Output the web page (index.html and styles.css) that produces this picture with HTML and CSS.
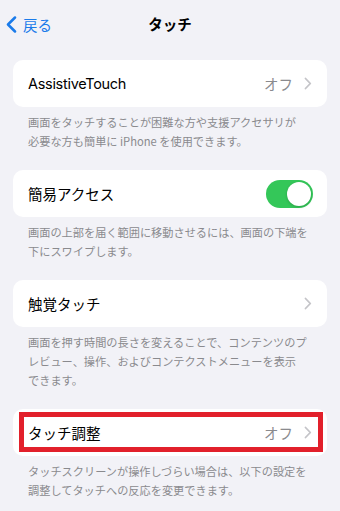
FILE: index.html
```html
<!DOCTYPE html>
<html lang="ja">
<head>
<meta charset="utf-8">
<link rel="stylesheet" href="styles.css">
</head>
<body>
<div class="screen">
  <header class="nav">
    <div class="back">
      <svg class="back-chev" width="12" height="17" viewBox="0 0 12 17"><path d="M10 1.5 L3 8.5 L10 15.5" fill="none" stroke="#1a7bea" stroke-width="2.5" stroke-linecap="round" stroke-linejoin="round"/></svg>
      <span class="back-label">戻る</span>
    </div>
    <div class="title">タッチ</div>
  </header>

  <main class="content">
    <section class="group">
      <div class="card">
        <span class="label latin">AssistiveTouch</span>
        <span class="value">オフ</span>
        <svg class="chev" width="8" height="13" viewBox="0 0 8 13"><path d="M1.5 1.5 L6.3 6.5 L1.5 11.5" fill="none" stroke="#c4c4c8" stroke-width="1.8" stroke-linecap="round" stroke-linejoin="round"/></svg>
      </div>
      <p class="desc">画面をタッチすることが困難な方や支援アクセサリが<br>必要な方も簡単に iPhone を使用できます。</p>
    </section>

    <section class="group">
      <div class="card">
        <span class="label">簡易アクセス</span>
        <span class="toggle"><span class="knob"></span></span>
      </div>
      <p class="desc">画面の上部を届く範囲に移動させるには、画面の下端を<br>下にスワイプします。</p>
    </section>

    <section class="group">
      <div class="card">
        <span class="label">触覚タッチ</span>
        <svg class="chev" width="8" height="13" viewBox="0 0 8 13"><path d="M1.5 1.5 L6.3 6.5 L1.5 11.5" fill="none" stroke="#c4c4c8" stroke-width="1.8" stroke-linecap="round" stroke-linejoin="round"/></svg>
      </div>
      <p class="desc">画面を押す時間の長さを変えることで、コンテンツのプ<br>レビュー、操作、およびコンテクストメニューを表示<br>できます。</p>
    </section>

    <section class="group">
      <div class="card highlighted">
        <span class="label">タッチ調整</span>
        <span class="value">オフ</span>
        <svg class="chev" width="8" height="13" viewBox="0 0 8 13"><path d="M1.5 1.5 L6.3 6.5 L1.5 11.5" fill="none" stroke="#c4c4c8" stroke-width="1.8" stroke-linecap="round" stroke-linejoin="round"/></svg>
        <span class="mark"></span>
      </div>
      <p class="desc">タッチスクリーンが操作しづらい場合は、以下の設定を<br>調整してタッチへの反応を変更できます。</p>
    </section>
  </main>
</div>
</body>
</html>
```

FILE: styles.css
```css
* { box-sizing: border-box; }
html, body {
  margin: 0;
  padding: 0;
  background: #f2f2f7;
}
body {
  font-family: "Inter", "Noto Sans CJK JP", sans-serif;
  color: #000;
  width: 340px;
  height: 511px;
  overflow: hidden;
}
.screen {
  width: 340px;
}
.nav {
  position: relative;
  height: 46px;
  display: flex;
  align-items: center;
  justify-content: center;
}
.back {
  position: absolute;
  left: 5px;
  top: 16px;
  display: flex;
  align-items: center;
  gap: 6px;
}
.back-chev { display: block; }
.back-label {
  font-family: "Noto Sans CJK JP", sans-serif;
  font-size: 14.5px;
  color: #1a7bea;
  line-height: 17px;
}
.title {
  font-family: "Noto Sans CJK JP", sans-serif;
  font-weight: 700;
  font-size: 14.5px;
  line-height: 18px;
  margin-top: 2px;
}
.content {
  padding: 14px 13px 0 13px;
  display: flex;
  flex-direction: column;
  gap: 19px;
}
.card {
  position: relative;
  background: #fff;
  border-radius: 10px;
  height: 47px;
  display: flex;
  align-items: center;
  padding: 0 15px 0 15px;
}
.label {
  flex: 1;
  font-family: "Noto Sans CJK JP", sans-serif;
  font-size: 14.5px;
  line-height: 20px;
  white-space: nowrap;
}
.label.latin {
  font-family: "Inter", "Noto Sans CJK JP", sans-serif;
  font-size: 14.5px;
  letter-spacing: -0.3px;
}
.value {
  font-family: "Noto Sans CJK JP", sans-serif;
  font-size: 14.5px;
  color: #8a8a8e;
  margin-right: 11px;
  line-height: 20px;
}
.chev { display: block; }
.toggle {
  width: 47px;
  height: 28px;
  border-radius: 14px;
  background: #34c759;
  display: flex;
  align-items: center;
  justify-content: flex-end;
  padding: 2px;
  margin-right: -1px;
}
.knob {
  width: 24px;
  height: 24px;
  border-radius: 50%;
  background: #fff;
  box-shadow: 0 1px 3px rgba(0,0,0,0.2);
}
.desc {
  margin: 0;
  padding: 6px 0 0 15px;
  font-family: "Noto Sans CJK JP", sans-serif;
  font-size: 11.2px;
  line-height: 19px;
  color: #8a8a8e;
  white-space: nowrap;
}
.mark {
  position: absolute;
  left: 6px;
  right: 4px;
  top: 3px;
  bottom: 4px;
  border: 5px solid #e2202b;
}
```
